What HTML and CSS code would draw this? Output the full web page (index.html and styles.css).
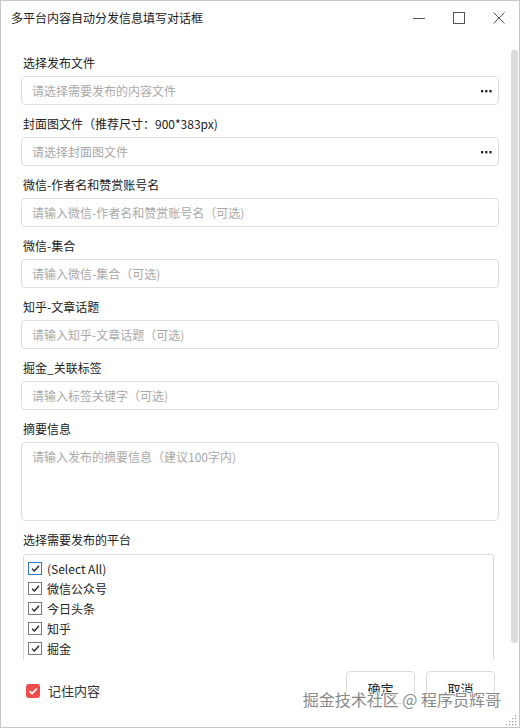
FILE: index.html
```html
<!DOCTYPE html>
<html lang="zh-CN">
<head>
<meta charset="utf-8">
<title>多平台内容自动分发信息填写对话框</title>
<link rel="stylesheet" href="styles.css">
</head>
<body>
<div class="window">
  <div class="titlebar">
    <div class="title">多平台内容自动分发信息填写对话框</div>
    <div class="ctrl"><svg width="12" height="12" viewBox="0 0 12 12"><line x1="0" y1="6.5" x2="12" y2="6.5" stroke="#555" stroke-width="1"/></svg></div>
    <div class="ctrl"><svg width="12" height="12" viewBox="0 0 12 12"><rect x="0.5" y="0.5" width="11" height="11" fill="none" stroke="#555" stroke-width="1"/></svg></div>
    <div class="ctrl"><svg width="12" height="12" viewBox="0 0 12 12"><path d="M0.5 0.5 L11.5 11.5 M11.5 0.5 L0.5 11.5" stroke="#555" stroke-width="1" fill="none"/></svg></div>
  </div>
  <div class="main">
    <div class="scroll">
      <div class="field">
        <div class="label">选择发布文件</div>
        <div class="input"><span class="ph">请选择需要发布的内容文件</span><svg class="more" width="11" height="3" viewBox="0 0 11 3"><rect x="0" y="0" width="2.2" height="2.4" fill="#222"/><rect x="4.2" y="0" width="2.2" height="2.4" fill="#222"/><rect x="8.4" y="0" width="2.2" height="2.4" fill="#222"/></svg></div>
      </div>
      <div class="field">
        <div class="label">封面图文件（推荐尺寸：900*383px)</div>
        <div class="input"><span class="ph">请选择封面图文件</span><svg class="more" width="11" height="3" viewBox="0 0 11 3"><rect x="0" y="0" width="2.2" height="2.4" fill="#222"/><rect x="4.2" y="0" width="2.2" height="2.4" fill="#222"/><rect x="8.4" y="0" width="2.2" height="2.4" fill="#222"/></svg></div>
      </div>
      <div class="field">
        <div class="label">微信-作者名和赞赏账号名</div>
        <div class="input"><span class="ph">请输入微信-作者名和赞赏账号名（可选)</span></div>
      </div>
      <div class="field">
        <div class="label">微信-集合</div>
        <div class="input"><span class="ph">请输入微信-集合（可选)</span></div>
      </div>
      <div class="field">
        <div class="label">知乎-文章话题</div>
        <div class="input"><span class="ph">请输入知乎-文章话题（可选)</span></div>
      </div>
      <div class="field">
        <div class="label">掘金_关联标签</div>
        <div class="input"><span class="ph">请输入标签关键字（可选)</span></div>
      </div>
      <div class="field">
        <div class="label">摘要信息</div>
        <div class="textarea"><span class="ph">请输入发布的摘要信息（建议100字内)</span></div>
      </div>
      <div class="field">
        <div class="label label-platform">选择需要发布的平台</div>
        <div class="listbox">
          <div class="item"><span class="cb cb-focus"><svg width="13" height="13" viewBox="0 0 13 13"><path d="M3 6.6 L5.4 9 L10 3.8" fill="none" stroke="#222" stroke-width="1.3"/></svg></span><span class="item-text">(Select All)</span></div>
          <div class="item"><span class="cb"><svg width="13" height="13" viewBox="0 0 13 13"><path d="M3 6.6 L5.4 9 L10 3.8" fill="none" stroke="#222" stroke-width="1.3"/></svg></span><span class="item-text">微信公众号</span></div>
          <div class="item"><span class="cb"><svg width="13" height="13" viewBox="0 0 13 13"><path d="M3 6.6 L5.4 9 L10 3.8" fill="none" stroke="#222" stroke-width="1.3"/></svg></span><span class="item-text">今日头条</span></div>
          <div class="item"><span class="cb"><svg width="13" height="13" viewBox="0 0 13 13"><path d="M3 6.6 L5.4 9 L10 3.8" fill="none" stroke="#222" stroke-width="1.3"/></svg></span><span class="item-text">知乎</span></div>
          <div class="item"><span class="cb"><svg width="13" height="13" viewBox="0 0 13 13"><path d="M3 6.6 L5.4 9 L10 3.8" fill="none" stroke="#222" stroke-width="1.3"/></svg></span><span class="item-text">掘金</span></div>
          <div class="item"></div>
        </div>
      </div>
    </div>
    <div class="scrollbar"><div class="thumb"></div></div>
  </div>
  <div class="footer">
    <div class="remember">
      <span class="cb-red"><svg width="14" height="14" viewBox="0 0 14 14"><path d="M3.4 7.2 L6 9.6 L10.8 4.6" fill="none" stroke="#fff" stroke-width="1.8"/></svg></span>
      <span class="remember-text">记住内容</span>
    </div>
    <div class="buttons">
      <div class="btn">确定</div>
      <div class="btn">取消</div>
    </div>
  </div>
  <div class="watermark">掘金技术社区 @ 程序员辉哥</div>
  <svg class="grip" width="12" height="12" viewBox="0 0 12 12">
    <rect x="9" y="1" width="1.2" height="1.2" fill="#999"/>
    <rect x="6" y="4" width="1.2" height="1.2" fill="#999"/><rect x="9" y="4" width="1.2" height="1.2" fill="#999"/>
    <rect x="3" y="7" width="1.2" height="1.2" fill="#999"/><rect x="6" y="7" width="1.2" height="1.2" fill="#999"/><rect x="9" y="7" width="1.2" height="1.2" fill="#999"/>
    <rect x="0" y="10" width="1.2" height="1.2" fill="#999"/><rect x="3" y="10" width="1.2" height="1.2" fill="#999"/><rect x="6" y="10" width="1.2" height="1.2" fill="#999"/><rect x="9" y="10" width="1.2" height="1.2" fill="#999"/>
  </svg>
</div>
</body>
</html>
```
FILE: styles.css
```css
* { box-sizing: border-box; }
html, body { margin: 0; padding: 0; background: #fff; }
body {
  font-family: "Noto Sans CJK SC", "Noto Sans", "Liberation Sans", sans-serif;
  font-size: 12px;
  color: #222;
}
.window {
  position: relative;
  width: 520px;
  height: 728px;
  border: 1px solid #c6c6c6;
  background: #fff;
  display: flex;
  flex-direction: column;
  overflow: hidden;
}
.titlebar {
  height: 37px;
  flex: none;
  display: flex;
  align-items: flex-start;
  padding-top: 7px;
}
.title {
  flex: 1;
  padding-left: 10px;
  font-size: 12px;
  line-height: 20px;
  color: #1a1a1a;
}
.ctrl {
  width: 40px;
  height: 20px;
  display: flex;
  align-items: center;
  justify-content: center;
  padding-bottom: 1px;
}
.main {
  height: 622px;
  flex: none;
  display: flex;
}
.scroll {
  flex: 1;
  overflow: hidden;
  padding: 15px 12px 0 20px;
  display: flex;
  flex-direction: column;
  gap: 9px;
}
.field { display: flex; flex-direction: column; flex: none; }
.label {
  line-height: 20px;
  height: 20px;
  padding-left: 2px;
  margin-bottom: 3px;
  color: #222;
  white-space: nowrap;
}
.label-platform { margin-bottom: 4px; }
.input {
  height: 29px;
  border: 1px solid #dedede;
  border-radius: 4px;
  display: flex;
  align-items: center;
  padding: 0 3px 0 10px;
}
.ph { color: #a9a9a9; flex: 1; white-space: nowrap; }
.more { flex: none; margin-right: 3px; margin-top: 1px; }
.textarea {
  height: 79px;
  border: 1px solid #dedede;
  border-radius: 4px;
  padding: 5px 10px;
  line-height: 18px;
}
.listbox {
  margin: 0 5px 0 2px;
  border: 1px solid #dcdcdc;
  border-radius: 3px;
  padding: 3px 4px;
  height: 140px;
}
.item {
  height: 20px;
  display: flex;
  align-items: center;
}
.cb {
  width: 14px;
  height: 13px;
  border: 1px solid #7a7a7a;
  display: flex;
  align-items: center;
  justify-content: center;
  background: #fff;
}
.cb svg { flex: none; }
.cb-focus { border-color: #2f78c8; }
.item-text { margin-left: 5px; color: #222; font-size: 12px; }
.scrollbar {
  width: 8px;
  flex: none;
  padding: 12px 1px 17px 0;
  display: flex;
}
.thumb {
  width: 7px;
  flex: 1;
  background: #dcdcdc;
  border-radius: 3px;
}
.footer {
  flex: 1;
  display: flex;
  justify-content: space-between;
  align-items: flex-start;
  padding: 11px 24px 0 25px;
}
.remember {
  display: flex;
  align-items: center;
  margin-top: 10px;
}
.cb-red {
  width: 14px;
  height: 14px;
  background: #ee4b4b;
  border-radius: 3px;
  display: flex;
  align-items: center;
  justify-content: center;
}
.remember-text { margin-left: 8px; font-size: 13px; color: #333; }
.buttons { display: flex; gap: 11px; }
.btn {
  width: 69px;
  height: 33px;
  border: 1px solid #dcdcdc;
  border-radius: 4px;
  background: #fff;
  display: flex;
  align-items: flex-start;
  justify-content: center;
  padding-top: 7px;
  font-size: 13px;
  color: #222;
}
.watermark {
  position: absolute;
  right: 18px;
  bottom: 16px;
  font-size: 16px;
  color: #8a8a8a;
  white-space: nowrap;
  text-shadow: 1px 1px 0 #fff, -1px -1px 0 #fff, 1px -1px 0 #fff, -1px 1px 0 #fff;
}
.grip {
  position: absolute;
  right: 1px;
  bottom: 1px;
}
```
